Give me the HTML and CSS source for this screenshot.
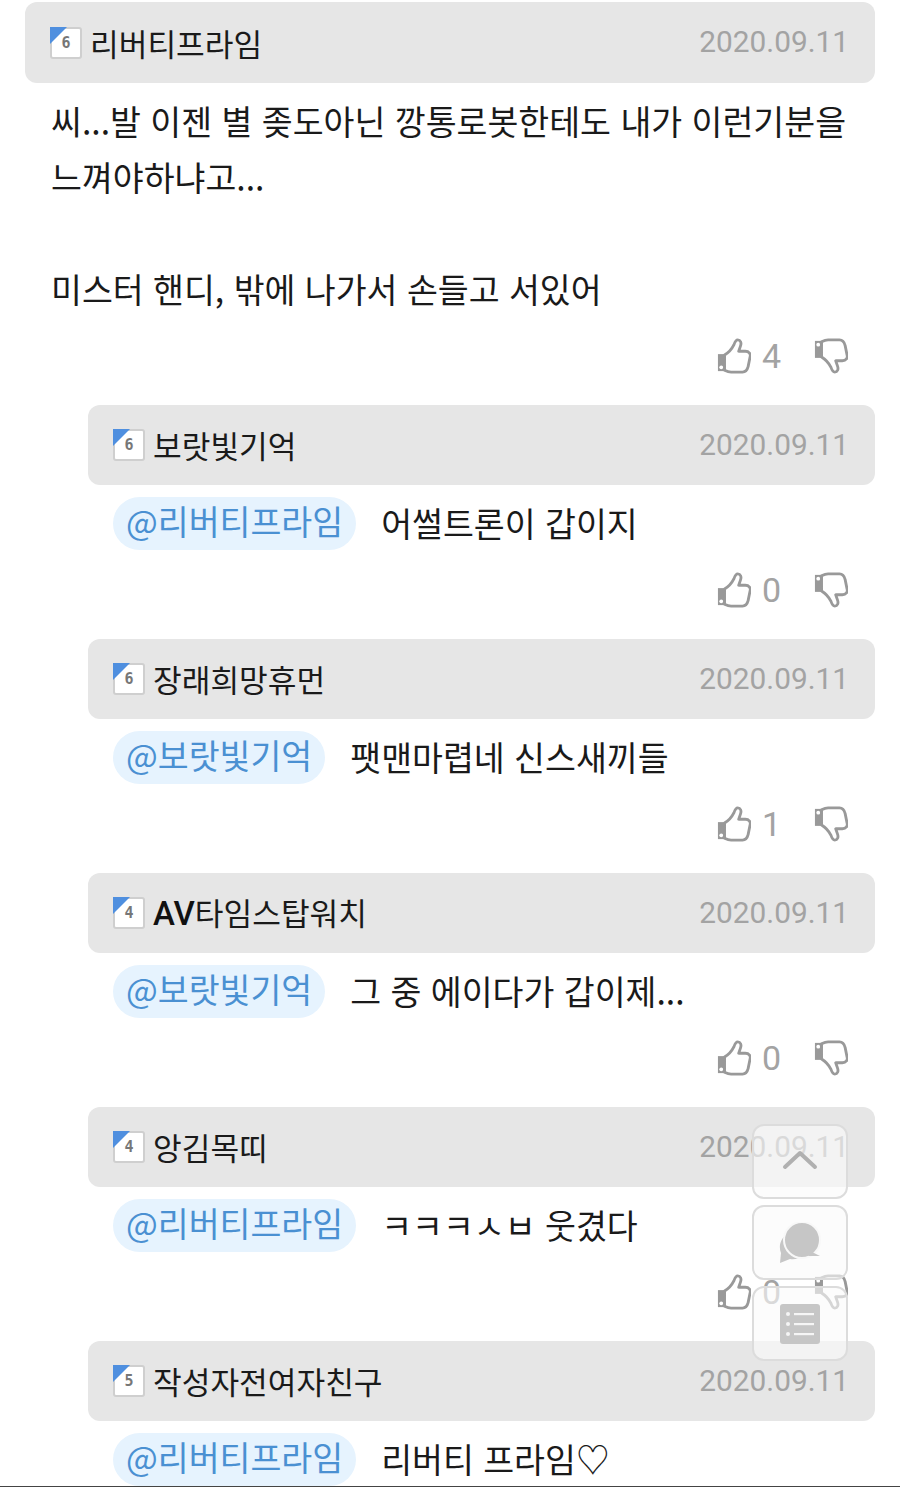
FILE: index.html
```html
<!DOCTYPE html>
<html lang="ko">
  <head>
    <meta charset="UTF-8" />
    <meta name="viewport" content="width=device-width, initial-scale=1.0" />
    <title>댓글</title>
    <link rel="stylesheet" href="styles.css">
  </head>
  <body>
    <svg class="defs" width="0" height="0">
      <symbol id="thumb" viewBox="0 0 36 38">
        <path d="M1 17h7v18H1z" fill="#999" />
        <circle cx="4.500" cy="31" r="2" fill="#fff" />
        <path d="M8 18c5-3 8-7 10-11 1-3 2-5 4-5 3 0 4 3 3 6l-2 6h7c4 0 6 3 5 6l-2 10c-1 4-3 6-6 6H15c-3 0-5-1-7-2z" fill="#fff" stroke="#999" stroke-width="3" stroke-linejoin="round" />
      </symbol>
    </svg>

    <div class="list">
      <div class="comment top">
        <div class="head">
          <span class="level"><b>6</b></span>
          <span class="name">리버티프라임</span>
          <span class="date">2020.09.11</span>
        </div>
        <div class="text">씨...발 이젠 별 좆도아닌 깡통로봇한테도 내가 이런기분을<br />느껴야하냐고...<br /><br />미스터 핸디, 밖에 나가서 손들고 서있어</div>
        <div class="votes">
          <svg class="up"><use href="#thumb" /></svg>
          <span class="count">4</span>
          <svg class="down"><use href="#thumb" /></svg>
        </div>
      </div>

      <div class="comment reply">
        <div class="head">
          <span class="level"><b>6</b></span>
          <span class="name">보랏빛기억</span>
          <span class="date">2020.09.11</span>
        </div>
        <div class="text"><span class="mention">@리버티프라임</span>어썰트론이 갑이지</div>
        <div class="votes">
          <svg class="up"><use href="#thumb" /></svg>
          <span class="count">0</span>
          <svg class="down"><use href="#thumb" /></svg>
        </div>
      </div>

      <div class="comment reply">
        <div class="head">
          <span class="level"><b>6</b></span>
          <span class="name">장래희망휴먼</span>
          <span class="date">2020.09.11</span>
        </div>
        <div class="text"><span class="mention">@보랏빛기억</span>팻맨마렵네 신스새끼들</div>
        <div class="votes">
          <svg class="up"><use href="#thumb" /></svg>
          <span class="count">1</span>
          <svg class="down"><use href="#thumb" /></svg>
        </div>
      </div>

      <div class="comment reply">
        <div class="head">
          <span class="level"><b>4</b></span>
          <span class="name"><strong>AV</strong>타임스탑워치</span>
          <span class="date">2020.09.11</span>
        </div>
        <div class="text"><span class="mention">@보랏빛기억</span>그 중 에이다가 갑이제...</div>
        <div class="votes">
          <svg class="up"><use href="#thumb" /></svg>
          <span class="count">0</span>
          <svg class="down"><use href="#thumb" /></svg>
        </div>
      </div>

      <div class="comment reply">
        <div class="head">
          <span class="level"><b>4</b></span>
          <span class="name">앙김목띠</span>
          <span class="date">2020.09.11</span>
        </div>
        <div class="text"><span class="mention">@리버티프라임</span>ㅋㅋㅋㅅㅂ 웃겼다</div>
        <div class="votes">
          <svg class="up"><use href="#thumb" /></svg>
          <span class="count">0</span>
          <svg class="down"><use href="#thumb" /></svg>
        </div>
      </div>

      <div class="comment reply last">
        <div class="head">
          <span class="level"><b>5</b></span>
          <span class="name">작성자전여자친구</span>
          <span class="date">2020.09.11</span>
        </div>
        <div class="text"><span class="mention">@리버티프라임</span>리버티 프라임♡</div>
      </div>
    </div>

    <div class="float-btns">
      <div class="float-btn">
        <svg class="arrow" width="36" height="20" viewBox="0 0 36 20"><path d="M3 17 18 3l15 14" fill="none" stroke="#b0b0b0" stroke-width="4" stroke-linecap="round" stroke-linejoin="round" /></svg>
      </div>
      <div class="float-btn">
        <svg width="42" height="42" viewBox="0 0 42 42">
          <path d="M10 12C2 14-1 24 2 31l-1 10 10-4c5 1 10-1 13-4z" fill="#c6c6c6" />
          <circle cx="23" cy="18" r="18" fill="#c6c6c6" stroke="#f8f8f8" stroke-width="2" />
          <path d="M33 30l8 4H29z" fill="#c6c6c6" />
        </svg>
      </div>
      <div class="float-btn">
        <svg width="40" height="40" viewBox="0 0 40 40">
          <rect width="40" height="40" rx="3" fill="#c6c6c6" />
          <g fill="#f5f5f5">
            <circle cx="8" cy="10" r="2" /><rect x="14" y="9" width="20" height="2.200" />
            <circle cx="8" cy="20" r="2" /><rect x="14" y="19" width="20" height="2.200" />
            <circle cx="8" cy="30" r="2" /><rect x="14" y="29" width="20" height="2.200" />
          </g>
        </svg>
      </div>
    </div>

    <div class="bottom-line"></div>
  </body>
</html>
```

FILE: styles.css
```css
html,
body {
  margin: 0;
  padding: 0;
  height: 1488px;
  overflow: hidden;
  background: #fff;
}
body {
  position: relative;
  font-family: "Noto Sans CJK KR", "Noto Sans", sans-serif;
  color: #1a1a1a;
}
.defs {
  position: absolute;
}

.list {
  padding: 2px 25px 0;
}
.top {
  height: 403px;
}
.reply {
  margin-left: 63px;
  height: 234px;
}
.reply.last {
  height: auto;
}

.head {
  display: flex;
  align-items: center;
  box-sizing: border-box;
  height: 81px;
  padding: 0 26px 0 25px;
  background: #e6e6e6;
  border-radius: 12px;
}
.reply .head {
  height: 80px;
}
.level {
  position: relative;
  box-sizing: border-box;
  width: 32px;
  height: 32px;
  margin-right: 8px;
  display: flex;
  align-items: center;
  justify-content: center;
  background: #fff;
  border: 2px solid #cfcfcf;
  border-radius: 3px;
}
.level::before {
  content: "";
  position: absolute;
  top: -2px;
  left: -2px;
  border-top: 17px solid #4f8fdf;
  border-right: 17px solid transparent;
}
.level > b {
  font-family: "DejaVu Sans Mono", monospace;
  font-size: 15px;
  color: #777;
}
.name {
  font-size: 31.200px;
  line-height: 1;
}
.name > strong {
  font-family: "Roboto", sans-serif;
  font-weight: 500;
  font-size: 33px;
  color: #111;
}
.date {
  margin-left: auto;
  font-family: "Roboto", sans-serif;
  font-size: 29.800px;
  color: #a3a3a3;
  position: relative;
  top: -1px;
}

.text {
  padding: 10px 0 0 26px;
  font-size: 33.600px;
  line-height: 56px;
  white-space: nowrap;
}
.reply .text {
  padding: 12px 0 0 25px;
  line-height: 52px;
}
.mention {
  display: inline-block;
  height: 53px;
  line-height: 48px;
  margin-right: 25px;
  padding: 0 13px;
  color: #4a90d2;
  background: #e6f3fe;
  border-radius: 27px;
  vertical-align: top;
}

.votes {
  display: flex;
  align-items: center;
  justify-content: flex-end;
  height: 40px;
  margin-top: 20px;
  padding-right: 27px;
}
.top .votes {
  margin-top: 19px;
}
.votes > .up,
.votes > .down {
  width: 34px;
  height: 36px;
}
.votes > .down {
  transform: scaleY(-1);
  margin-left: 34px;
}
.count {
  width: 18px;
  margin-left: 11px;
  font-family: "Roboto", sans-serif;
  font-size: 34px;
  color: #a3a3a3;
}

.float-btns {
  position: absolute;
  top: 1124px;
  left: 752px;
  display: flex;
  flex-direction: column;
  gap: 6px;
}
.float-btn {
  box-sizing: border-box;
  width: 96px;
  height: 75px;
  display: flex;
  align-items: center;
  justify-content: center;
  background: rgba(250, 250, 250, 0.62);
  border: 2px solid #dcdcdc;
  border-radius: 12px;
}
.arrow {
  margin-bottom: 4px;
}

.bottom-line {
  position: absolute;
  left: 0;
  right: 0;
  bottom: 1px;
  height: 1px;
  background: #444;
}
```
